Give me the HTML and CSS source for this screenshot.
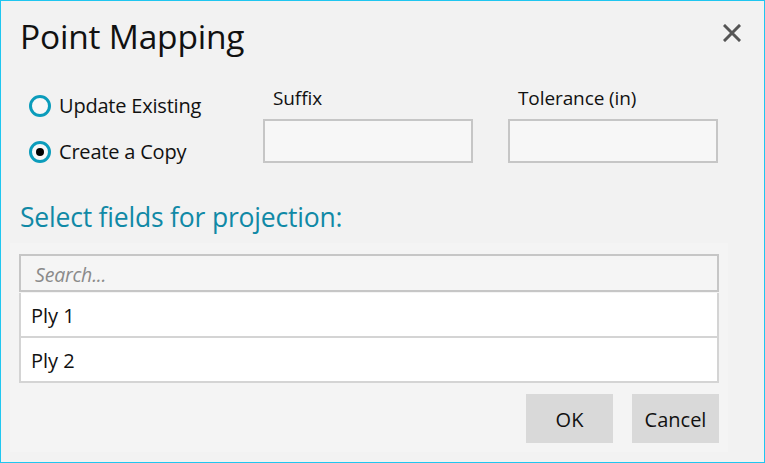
FILE: index.html
```html
<!DOCTYPE html>
<html>
<head>
<meta charset="utf-8">
<link rel="stylesheet" href="styles.css">
</head>
<body>
<div class="window">
  <div class="header">
    <div class="title">Point Mapping</div>
    <svg class="close" width="18" height="18" viewBox="0 0 18 18"><path d="M2 2 L16 16 M16 2 L2 16" stroke="#555" stroke-width="3" stroke-linecap="square"/></svg>
  </div>
  <div class="options">
    <div class="radios">
      <label class="radio"><span class="ring"></span><span class="rlabel">Update Existing</span></label>
      <label class="radio"><span class="ring checked"></span><span class="rlabel">Create a Copy</span></label>
    </div>
    <div class="field">
      <div class="flabel">Suffix</div>
      <div class="input"></div>
    </div>
    <div class="field">
      <div class="flabel">Tolerance (in)</div>
      <div class="input"></div>
    </div>
  </div>
  <div class="section">Select fields for projection:</div>
  <div class="panel">
    <div class="search">Search...</div>
    <div class="list">
      <div class="item">Ply 1</div>
      <div class="item">Ply 2</div>
    </div>
    <div class="buttons">
      <div class="btn">OK</div>
      <div class="btn">Cancel</div>
    </div>
  </div>
</div>
</body>
</html>
```
FILE: styles.css
```css
* { box-sizing: border-box; }
html, body { margin: 0; padding: 0; }
body {
  font-family: "Open Sans", "Noto Sans", sans-serif;
  color: #111;
}
.window {
  width: 765px;
  height: 463px;
  border: 1px solid #1fc6f0;
  background: #f2f2f2;
  overflow: hidden;
}
.header {
  display: flex;
  justify-content: space-between;
  align-items: flex-start;
  padding: 12px 23px 0 19px;
  height: 70px;
}
.title {
  font-size: 33.5px;
  line-height: 46px;
  letter-spacing: -0.2px;
}
.close { margin-top: 11px; }
.options {
  display: flex;
  padding-left: 28px;
  height: 120px;
}
.radios {
  width: 234px;
  display: flex;
  flex-direction: column;
  gap: 18px;
  padding-top: 21px;
}
.radio {
  display: flex;
  align-items: center;
  gap: 8px;
  height: 28px;
}
.ring {
  width: 22px;
  height: 22px;
  border: 3px solid #0b9cbb;
  border-radius: 50%;
  background: #f7f7f7;
  display: flex;
  align-items: center;
  justify-content: center;
}
.ring.checked::after {
  content: "";
  width: 8px;
  height: 8px;
  border-radius: 50%;
  background: #000;
}
.rlabel {
  font-size: 20px;
  letter-spacing: -0.2px;
  line-height: 28px;
}
.field {
  width: 210px;
  margin-right: 35px;
}
.flabel {
  font-size: 19px;
  padding-left: 10px;
  line-height: 26px;
  height: 48px;
  padding-top: 14px;
  letter-spacing: -0.1px;
}
.input {
  height: 44px;
  border: 2px solid #c6c6c6;
  background: #f7f7f7;
}
.section {
  color: #1089a6;
  font-size: 26.5px;
  padding-left: 19px;
  line-height: 34px;
  height: 52px;
  padding-top: 9px;
  letter-spacing: -0.2px;
}
.panel {
  margin-left: 9px;
  width: 718px;
  height: 209px;
  background: #f4f4f4;
  padding: 11px 9px 0 9px;
}
.search {
  height: 38px;
  border: 2px solid #c6c6c6;
  background: #f5f5f5;
  color: #8a8a8a;
  font-style: italic;
  font-size: 19.5px;
  line-height: 38px;
  padding-left: 14px;
  letter-spacing: -0.2px;
}
.list {
  border: 2px solid #d4d4d4;
  border-top: none;
  background: #d4d4d4;
}
.item {
  background: #fff;
  height: 43px;
  margin-top: 1px;
  font-size: 20px;
  line-height: 45px;
  padding-left: 10px;
}
.item + .item { margin-top: 2px; }
.buttons {
  display: flex;
  justify-content: flex-end;
  gap: 19px;
  margin-top: 11px;
}
.btn {
  width: 87px;
  height: 49px;
  background: #d9d9d9;
  font-size: 20px;
  line-height: 52px;
  text-align: center;
}
```
